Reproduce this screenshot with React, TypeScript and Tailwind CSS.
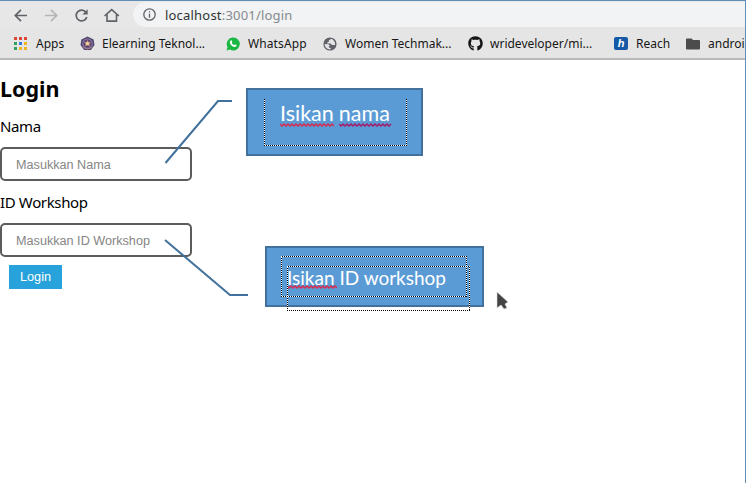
import type { ReactNode } from "react";
import { FaGithub } from "react-icons/fa";

function AppsIcon() {
  const colors = ["#dc4436", "#dc4436", "#dc4436", "#2fa35a", "#367be0", "#f0b420", "#2fa35a", "#f0b420", "#f0b420"];
  return (
    <div className="grid h-[13px] w-[13px] grid-cols-3 gap-[2px]">
      {colors.map((color, i) => (
        <span key={i} style={{ backgroundColor: color }} />
      ))}
    </div>
  );
}

function CrestIcon() {
  return (
    <svg width="15" height="15" viewBox="0 0 15 15">
      <path d="M7.5.5 13.6 3.4 14.5 9 10.8 14H4.2L.5 9 1.4 3.4Z" fill="#4a466f" />
      <circle cx="7.5" cy="7.6" r="4.8" fill="#5a4672" stroke="#8a719a" strokeWidth="1.2" />
      <path d="m7.5 4 1.100 1.900 2.200.2-1.400 1.900.8 2.300-2.700-.8-2.700.8.8-2.300-1.400-1.900 2.200-.2Z" fill="#c0938a" />
      <circle cx="7.5" cy="7.6" r="1.5" fill="#f4d790" />
      <path d="M3.5 11.500q4 2.800 8 0" fill="none" stroke="#b18488" />
    </svg>
  );
}

function WhatsAppIcon() {
  return (
    <svg width="14" height="14" viewBox="0 0 14 14">
      <path d="M.6 13.6 1.5 10A6.5 6.5 0 1 1 4 12.6Z" fill="#19b843" />
      <path d="M4.700 3.500c.5-.5 1-.2 1.200.4l.4 1c.1.4-.5.8-.5 1.100.4 1 1.200 1.700 2.200 2.100.4.1.8-.8 1.200-.7l1.300.7c.4.3 0 1.200-.5 1.500C7.600 11 3.700 7.700 3.800 5.100c0-.7.4-1.200.9-1.600Z" fill="#fff" />
    </svg>
  );
}

function GlobeIcon() {
  return (
    <svg width="14" height="14" viewBox="0 0 14 14">
      <circle cx="7" cy="7" r="6.6" fill="#5f6368" />
      <path d="M8.300 1.800 5.800 3.500v1.400L4.200 5.500v1h3.600l1.100 1.400h3.200c.3-2.600-1.200-5-3.800-6.100ZM1.700 7.100l3.700.2 1.500 1.500-1.200.6.200 1.200 1.900.3-.4 1.500C4.200 12.500 1.500 10 1.700 7.100Z" fill="#e5e5e5" />
    </svg>
  );
}

function Bookmark({ icon, children }: { icon: ReactNode; children: ReactNode }) {
  return (
    <a className="flex items-center whitespace-nowrap">
      <span className="flex w-[22px] shrink-0 items-center">{icon}</span>
      {children}
    </a>
  );
}

function Toolbar() {
  return (
    <div className="flex h-[25px] items-center bg-[#e7e7e7]">
      <svg width="133" height="25" viewBox="0 2 133 25" fill="none" stroke="#5f6368" strokeWidth="1.7" className="shrink-0">
        <path d="M27 15.500H15.500M21 9.800l-5.700 5.700 5.700 5.700" />
        <path d="M45 15.500h11.500M51 9.800l5.700 5.700-5.700 5.700" stroke="#b4b5b7" />
        <path d="M86 12.300a5.400 5.400 0 1 0 .8 4.700" />
        <path d="M87.700 9.200v5.300h-5.300Z" fill="#5f6368" stroke="none" />
        <path d="m104.500 16 7.200-6.400 7.200 6.400M107 14.500v6.600h9.500v-6.600" strokeWidth="1.600" />
      </svg>
      <div className="flex h-full flex-1 items-center rounded-l-full bg-[#f1f3f4] pl-[10px] text-[13px] text-[#303336]">
        <svg width="13" height="13" viewBox="0 0 13 13" fill="none" stroke="#5f6368" strokeWidth="1.300">
          <circle cx="6.500" cy="6.500" r="5.700" />
          <path d="M6.500 5.800v4M6.500 3.200v1.300" />
        </svg>
        <span className="mt-[2px] ml-[9px] tracking-[0.2px]">localhost<span className="text-[#85898e]">:3001/login</span></span>
      </div>
    </div>
  );
}

function BookmarksBar() {
  return (
    <nav className="grid h-[33px] grid-cols-[66px_146px_97px_145px_146px_72px_80px] items-center overflow-hidden border-b-2 border-[#b8b9ba] bg-[#e5e5e5] pt-[2px] pl-[14px] text-[12px] text-[#161616]">
      <Bookmark icon={<AppsIcon />}>Apps</Bookmark>
      <Bookmark icon={<CrestIcon />}>Elearning Teknol...</Bookmark>
      <Bookmark icon={<WhatsAppIcon />}><span className="tracking-[0.1px]">WhatsApp</span></Bookmark>
      <Bookmark icon={<GlobeIcon />}>Women Techmak...</Bookmark>
      <Bookmark icon={<FaGithub size={15} color="#161616" />}>wrideveloper/mi...</Bookmark>
      <Bookmark icon={<span className="flex h-[13px] w-[14px] items-center justify-center rounded-[2px] bg-[#1559a7] font-['Liberation_Sans',sans-serif] text-[11px] font-bold text-white italic">h</span>}>Reach</Bookmark>
      <Bookmark icon={<svg width="14" height="12" viewBox="0 0 14 12"><path d="M0 1.500Q0 .5 1 .5h4.500L7 2h6q1 0 1 1v7.500q0 1-1 1H1q-1 0-1-1Z" fill="#4c4c4c" /></svg>}>androi</Bookmark>
    </nav>
  );
}

const inputClass = "block h-[34px] w-48 rounded-[5px] border-2 border-[#5c5c5c] bg-white px-[14px] pt-px font-['Liberation_Sans',sans-serif] text-[12.65px] placeholder:text-[#858585] outline-none";
const labelClass = "block h-6 text-[15px] leading-6 tracking-[-0.36px]";

function Squiggle({ width, color }: { width: number; color: string }) {
  const points = Array.from({ length: Math.floor(width / 2) + 1 }, (_, i) => `${i * 2},${i % 2 ? 3 : 1}`).join(" ");
  return (
    <svg width={width} height="4" className="absolute bottom-0 left-0">
      <polyline points={points} fill="none" stroke={color} strokeWidth="1.5" />
    </svg>
  );
}

function DottedLine({ d }: { d: string }) {
  return (
    <g fill="none" strokeWidth="1" shapeRendering="crispEdges">
      <path d={d} stroke="#fff" />
      <path d={d} stroke="#000" strokeDasharray="1 1" />
    </g>
  );
}

export default function App() {
  return (
    <div className="relative h-[483px] w-[746px] overflow-hidden border-t border-r border-[#608eb9] bg-white text-black">
      <header className="font-['Noto_Sans',sans-serif]">
        <div className="h-px bg-[#e7e7e7]" />
        <Toolbar />
        <BookmarksBar />
      </header>
      <main className="flex flex-col items-start pt-[13px] font-['Noto_Sans',sans-serif]">
        <h1 className="h-8 text-[21.5px] leading-8 font-bold">Login</h1>
        <label htmlFor="nama" className={`${labelClass} mt-[9px]`}>Nama</label>
        <input id="nama" placeholder="Masukkan Nama" className={`${inputClass} mt-[9px]`} />
        <label htmlFor="workshop" className={`${labelClass} mt-[9px]`}>ID Workshop</label>
        <input id="workshop" placeholder="Masukkan ID Workshop" className={`${inputClass} mt-[9px]`} />
        <button className="mt-2 ml-[9px] h-6 w-[53px] bg-[#27a2da] pt-[2px] font-['Liberation_Sans',sans-serif] text-[12.7px] text-white">Login</button>
      </main>

      <svg className="absolute -top-px left-0" width="746" height="483" fill="none" stroke="#41719c" strokeWidth="2">
        <path d="m165.500 163 52.500-62h14" />
        <path d="m165 240 65 55h18" />
      </svg>

      <section className="absolute top-[87px] left-[246px] h-[68px] w-[177px] border-2 border-[#41719c] bg-[#5b9bd5] font-['Lato',sans-serif] text-white">
        <p className="absolute top-[9px] left-8 flex gap-[5px] text-[21.500px] leading-[28px]">
          <span className="relative">Isikan<Squiggle width={54} color="#d62c50" /></span>
          <span className="relative">nama<Squiggle width={53} color="#a31f6b" /></span>
        </p>
      </section>

      <section className="absolute top-[245px] left-[265px] h-[61px] w-[219px] border-2 border-[#41719c] bg-[#5b9bd5] font-['Lato',sans-serif] text-white">
        <p className="absolute top-[16px] left-5 text-[19px] leading-7 whitespace-nowrap">
          <span className="relative">Isikan<Squiggle width={50} color="#d62c50" /></span> ID workshop
        </p>
      </section>

      <svg className="absolute -top-px left-0" width="746" height="483">
        <DottedLine d="M264.500 99V145.500H406.500V99" />
        <DottedLine d="M281.500 256.500H466.500V296.500H281.500Z" />
        <DottedLine d="M287.500 266.500H469.500V310.500H287.500Z" />
      </svg>

      <svg className="absolute top-[290px] left-[495px]" width="16" height="20" viewBox="0 0 16 20">
        <path d="M2 1v16l4-3 3 4 3-1-2-4 3-2Z" fill="#444" stroke="#dedede" strokeWidth=".6" />
      </svg>
    </div>
  );
}
